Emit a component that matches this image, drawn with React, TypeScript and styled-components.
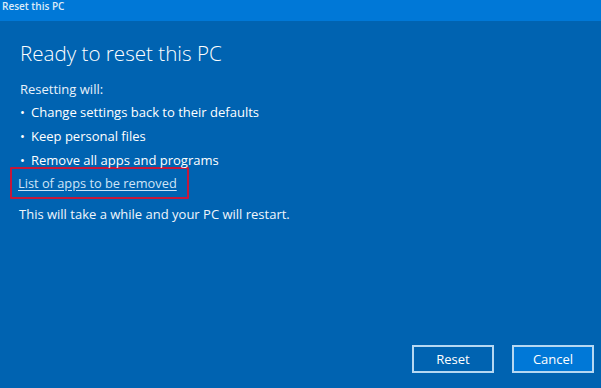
import styled, { createGlobalStyle } from "styled-components"

const GlobalStyle = createGlobalStyle`
  html, body {
    margin: 0;
    padding: 0;
    background: #0063b1;
  }
  body {
    font-family: "Open Sans", "Noto Sans", sans-serif;
    color: #ffffff;
  }
`

const items = [
  "Change settings back to their defaults",
  "Keep personal files",
  "Remove all apps and programs",
]

export default function App() {
  return (
    <>
      <GlobalStyle />
      <Window>
        <TitleBar>Reset this PC</TitleBar>
        <Body>
          <Heading>Ready to reset this PC</Heading>
          <Intro>Resetting will:</Intro>
          <BulletList>
            {items.map((item) => (
              <Bullet key={item}>{item}</Bullet>
            ))}
          </BulletList>
          <LinkBox>
            <AppsLink href="#">List of apps to be removed</AppsLink>
          </LinkBox>
          <Note>This will take a while and your PC will restart.</Note>
        </Body>
        <Footer>
          <DialogButton>Reset</DialogButton>
          <DialogButton primary>Cancel</DialogButton>
        </Footer>
      </Window>
    </>
  )
}

const Window = styled.div`
  display: flex;
  flex-direction: column;
  width: 601px;
  height: 388px;
  background: #0063b1;
  overflow: hidden;
`

const TitleBar = styled.div`
  height: 21px;
  flex-shrink: 0;
  background: #0078d7;
  color: #dcebf8;
  font-size: 10px;
  font-weight: 600;
  line-height: 11px;
  padding: 1px 0 0 2px;
  box-sizing: border-box;
`

const Body = styled.div`
  flex: 1;
  display: flex;
  flex-direction: column;
  padding: 17px 0 0 20px;
`

const Heading = styled.h1`
  margin: 0;
  font-weight: 300;
  font-size: 20.6px;
  line-height: 30px;
  color: #ffffff;
`

const Intro = styled.div`
  margin-top: 11px;
  font-size: 13px;
  line-height: 20px;
  color: #e8f1fa;
`

const BulletList = styled.ul`
  margin: 3px 0 0;
  padding: 0;
  list-style: none;
  display: flex;
  flex-direction: column;
  gap: 4px;
`

const Bullet = styled.li`
  position: relative;
  padding-left: 11px;
  font-size: 13px;
  line-height: 20px;

  &::before {
    content: "•";
    position: absolute;
    left: 0;
  }
`

const LinkBox = styled.div`
  align-self: flex-start;
  margin: -3px 0 0 -10px;
  padding: 2px 10px 4px 6px;
  border: 2px solid #c4173a;
  border-radius: 1px;
`

const AppsLink = styled.a`
  color: #cfe5f7;
  font-size: 12.8px;
  line-height: 20px;
  text-decoration: underline;
  text-underline-offset: 2px;
`

const Note = styled.div`
  margin-top: 5px;
  margin-left: -1px;
  font-size: 13px;
  line-height: 20px;
  color: #f0f6fc;
`

const Footer = styled.div`
  display: flex;
  justify-content: flex-end;
  gap: 18px;
  padding: 0 7px 15px 0;
`

const DialogButton = styled.button<{ primary?: boolean }>`
  width: 82px;
  height: 28px;
  box-sizing: border-box;
  border: 2px solid #b6d8f2;
  background: ${(p) => (p.primary ? "#0078d7" : "transparent")};
  color: #ffffff;
  font-family: "Open Sans", "Noto Sans", sans-serif;
  font-size: 13px;
  padding: 0;
`
